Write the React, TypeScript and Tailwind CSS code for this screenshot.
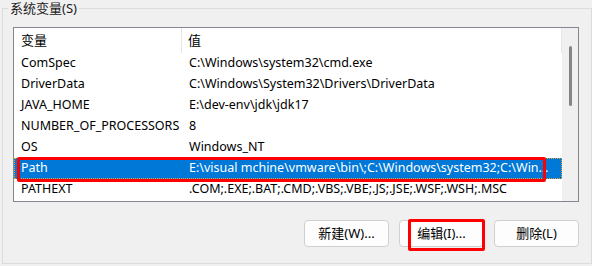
import React from "react";

const rows: [string, string][] = [
  ["ComSpec", "C:\\Windows\\system32\\cmd.exe"],
  ["DriverData", "C:\\Windows\\System32\\Drivers\\DriverData"],
  ["JAVA_HOME", "E:\\dev-env\\jdk\\jdk17"],
  ["NUMBER_OF_PROCESSORS", "8"],
  ["OS", "Windows_NT"],
  ["Path", "E:\\visual mchine\\vmware\\bin\\;C:\\Windows\\system32;C:\\Windows;C:\\Windows\\System32\\Wbem"],
  ["PATHEXT", ".COM;.EXE;.BAT;.CMD;.VBS;.VBE;.JS;.JSE;.WSF;.WSH;.MSC"],
];

const font = { fontFamily: '"Noto Sans", "Noto Sans CJK SC", sans-serif' };

export default function App() {
  return (
    <div
      className="w-[592px] h-[266px] bg-[#f0f0f0] text-[12.5px] text-black overflow-hidden pt-[8px] pl-[2px]"
      style={font}
    >
      <div className="relative w-[590px] h-[256px] border border-[#dcdcdc] pt-[18px] pl-[10px]">
        <div className="absolute left-[5px] top-[-10px] px-[2px] bg-[#f0f0f0] text-[13px] leading-[18px] text-[#1a1a1a]">
          系统变量(S)
        </div>
        <div className="relative w-[566px] h-[175px] border border-[#828790] bg-white flex">
          <div className="w-[548px] flex flex-col">
            <div className="h-[25px] flex items-center text-[13px]">
              <div className="w-[168px] h-full pl-[7px] flex items-center border-r border-[#e5e5e5]">变量</div>
              <div className="flex-1 h-full pl-[6px] flex items-center border-r border-[#e5e5e5]">值</div>
            </div>
            {rows.map(([k, v]) => {
              const sel = k === "Path";
              return (
                <div
                  key={k}
                  className={
                    "h-[21px] flex items-center " +
                    (sel ? "bg-[#0078d7] text-white outline outline-1 outline-dotted outline-[#f0a030] -outline-offset-1" : "")
                  }
                >
                  <div className="w-[168px] pl-[7px] whitespace-nowrap">{k}</div>
                  <div className="w-[370px] pl-[7px] whitespace-nowrap overflow-hidden text-ellipsis">{v}</div>
                </div>
              );
            })}
          </div>
          <div className="w-[16px] h-full bg-[#f0f0f0] flex justify-center pt-[18px]">
            <div className="w-[3px] h-[60px] rounded-full bg-[#858585]" />
          </div>
          <div className="absolute left-[3px] top-[129px] w-[529px] h-[25px] border-[3px] border-[#ff0000] rounded-[2px]" />
        </div>
        <div className="flex justify-end gap-[10px] mt-[18px] pr-[12px] text-[13px]">
          <button className="w-[85px] h-[27px] rounded-[4px] border border-[#d0d0d0] bg-[#fdfdfd]">新建(W)...</button>
          <div className="relative">
            <button className="w-[85px] h-[27px] rounded-[4px] border border-[#d0d0d0] bg-[#fdfdfd]">编辑(I)...</button>
            <div className="absolute left-[9px] top-[-1px] w-[77px] h-[32px] border-[3px] border-[#ff0000] rounded-[2px]" />
          </div>
          <button className="w-[85px] h-[27px] rounded-[4px] border border-[#d0d0d0] bg-[#fdfdfd]">删除(L)</button>
        </div>
      </div>
    </div>
  );
}
